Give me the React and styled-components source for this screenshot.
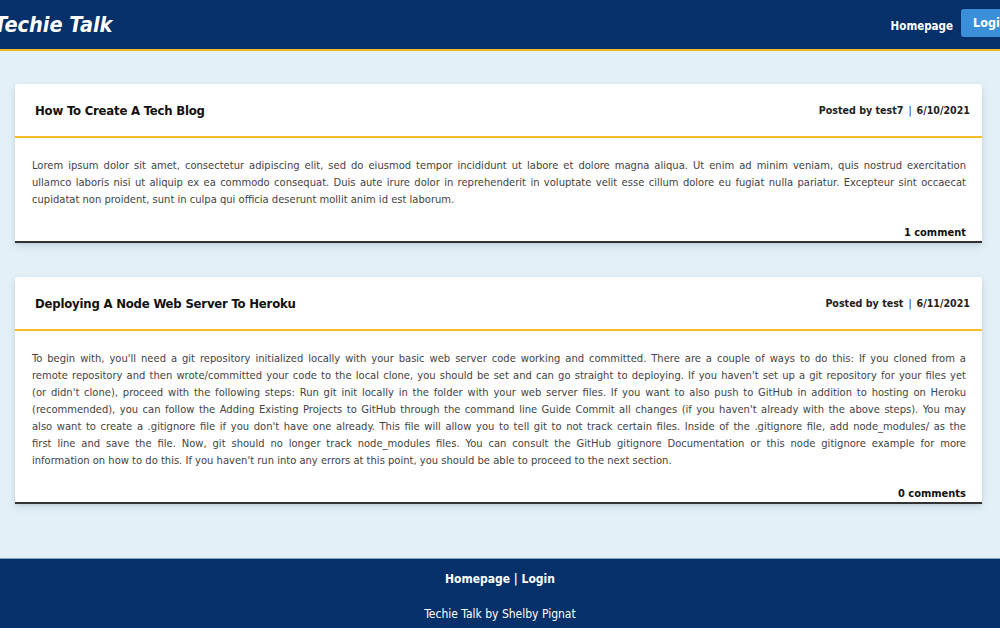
import React from "react";
import styled, { createGlobalStyle } from "styled-components";

const Global = createGlobalStyle`
  html, body { margin: 0; padding: 0; }
  body {
    background: #e3f1f7;
    font-family: "DejaVu Sans Condensed", "DejaVu Sans", sans-serif;
    font-stretch: condensed;
    overflow-x: hidden;
  }
  * { box-sizing: border-box; }
`;

const Page = styled.div`
  width: 1000px;
  min-height: 628px;
  display: flex;
  flex-direction: column;
  overflow: hidden;
`;

const Header = styled.header`
  height: 51px;
  background: #05306a;
  border-bottom: 2px solid #f2b61c;
  display: flex;
  align-items: center;
  justify-content: space-between;
`;

const Brand = styled.h1`
  margin: 0 0 0 -6px;
  color: #fff;
  font-size: 21.5px;
  font-style: italic;
  font-weight: bold;
  line-height: 1;
`;

const Nav = styled.nav`
  display: flex;
  align-items: center;
  gap: 8px;
  margin-right: -6px;
  padding-bottom: 3px;
`;

const NavLink = styled.a`
  color: #fff;
  font-size: 11.5px;
  font-weight: bold;
  text-decoration: none;
  padding-top: 6px;
`;

const LoginButton = styled.a`
  display: block;
  background: #3a8fd8;
  color: #fff;
  font-size: 12.5px;
  font-weight: bold;
  border-radius: 3px;
  padding: 6px 12px 7px 12px;
  text-decoration: none;
  width: 45px;
  overflow: hidden;
  white-space: nowrap;
`;

const Main = styled.main`
  flex: 1;
  padding: 33px 18px 54px 15px;
  display: flex;
  flex-direction: column;
  gap: 34px;
`;

const Card = styled.article`
  background: #fff;
  border-bottom: 2px solid #333;
  box-shadow: 0 3px 8px rgba(0, 40, 80, 0.12), 0 1px 3px rgba(0,0,0,0.08);
  border-radius: 3px 3px 0 0;
`;

const CardHeader = styled.div`
  height: 54px;
  border-bottom: 2px solid #f6bd2b;
  display: flex;
  align-items: center;
  justify-content: space-between;
  padding: 0 12px 0 20px;
`;

const CardTitle = styled.h2`
  margin: 0;
  font-size: 13px;
  font-weight: bold;
  color: #111;
  letter-spacing: -0.2px;
`;

const Meta = styled.div`
  font-size: 10.6px;
  font-weight: bold;
  color: #222;
`;

const Sep = styled.span`
  margin: 0 5px;
  font-weight: normal;
`;

const Body = styled.div`
  padding: 19px 16px 0 17px;
  font-size: 11.1px;
  line-height: 17px;
  color: #444;
`;

const Line = styled.span`
  display: block;
  white-space: nowrap;
  text-align: justify;
  text-align-last: ${(p) => (p.$last ? "left" : "justify")};
`;

const CardFooter = styled.div`
  text-align: right;
  padding: 17px 16px 0;
  font-size: 11px;
  font-weight: bold;
  color: #111;
  line-height: 16px;
`;

const Footer = styled.footer`
  background: #05306a;
  border-top: 1px solid #7fa4c4;
  height: 71px;
  display: flex;
  flex-direction: column;
  align-items: center;
  color: #fff;
  padding-top: 12px;
  gap: 19px;
`;

const FooterNav = styled.div`
  font-size: 12px;
  font-weight: bold;
  line-height: 16px;
`;

const FooterLink = styled.a`
  color: #fff;
  text-decoration: none;
`;

const Credit = styled.div`
  font-size: 12px;
  line-height: 16px;
`;

const posts = [
  {
    title: "How To Create A Tech Blog",
    author: "test7",
    date: "6/10/2021",
    lines: [
      "Lorem ipsum dolor sit amet, consectetur adipiscing elit, sed do eiusmod tempor incididunt ut labore et dolore magna aliqua. Ut enim ad minim veniam, quis nostrud exercitation",
      "ullamco laboris nisi ut aliquip ex ea commodo consequat. Duis aute irure dolor in reprehenderit in voluptate velit esse cillum dolore eu fugiat nulla pariatur. Excepteur sint occaecat",
      "cupidatat non proident, sunt in culpa qui officia deserunt mollit anim id est laborum.",
    ],
    comments: "1 comment",
  },
  {
    title: "Deploying A Node Web Server To Heroku",
    author: "test",
    date: "6/11/2021",
    lines: [
      "To begin with, you'll need a git repository initialized locally with your basic web server code working and committed. There are a couple of ways to do this: If you cloned from a",
      "remote repository and then wrote/committed your code to the local clone, you should be set and can go straight to deploying. If you haven't set up a git repository for your files yet",
      "(or didn't clone), proceed with the following steps: Run git init locally in the folder with your web server files. If you want to also push to GitHub in addition to hosting on Heroku",
      "(recommended), you can follow the Adding Existing Projects to GitHub through the command line Guide Commit all changes (if you haven't already with the above steps). You may",
      "also want to create a .gitignore file if you don't have one already. This file will allow you to tell git to not track certain files. Inside of the .gitignore file, add node_modules/ as the",
      "first line and save the file. Now, git should no longer track node_modules files. You can consult the GitHub gitignore Documentation or this node gitignore example for more",
      "information on how to do this. If you haven't run into any errors at this point, you should be able to proceed to the next section.",
    ],
    comments: "0 comments",
  },
];

export default function App() {
  return (
    <>
      <Global />
      <Page>
        <Header>
          <Brand>Techie Talk</Brand>
          <Nav>
            <NavLink href="#">Homepage</NavLink>
            <LoginButton href="#">Login</LoginButton>
          </Nav>
        </Header>
        <Main>
          {posts.map((p) => (
            <Card key={p.title}>
              <CardHeader>
                <CardTitle>{p.title}</CardTitle>
                <Meta>
                  Posted by {p.author}
                  <Sep>|</Sep>
                  {p.date}
                </Meta>
              </CardHeader>
              <Body>
                {p.lines.map((l, i) => (
                  <Line key={i} $last={i === p.lines.length - 1}>
                    {l}
                  </Line>
                ))}
              </Body>
              <CardFooter>{p.comments}</CardFooter>
            </Card>
          ))}
        </Main>
        <Footer>
          <FooterNav>
            <FooterLink href="#">Homepage</FooterLink> | <FooterLink href="#">Login</FooterLink>
          </FooterNav>
          <Credit>Techie Talk by Shelby Pignat</Credit>
        </Footer>
      </Page>
    </>
  );
}
